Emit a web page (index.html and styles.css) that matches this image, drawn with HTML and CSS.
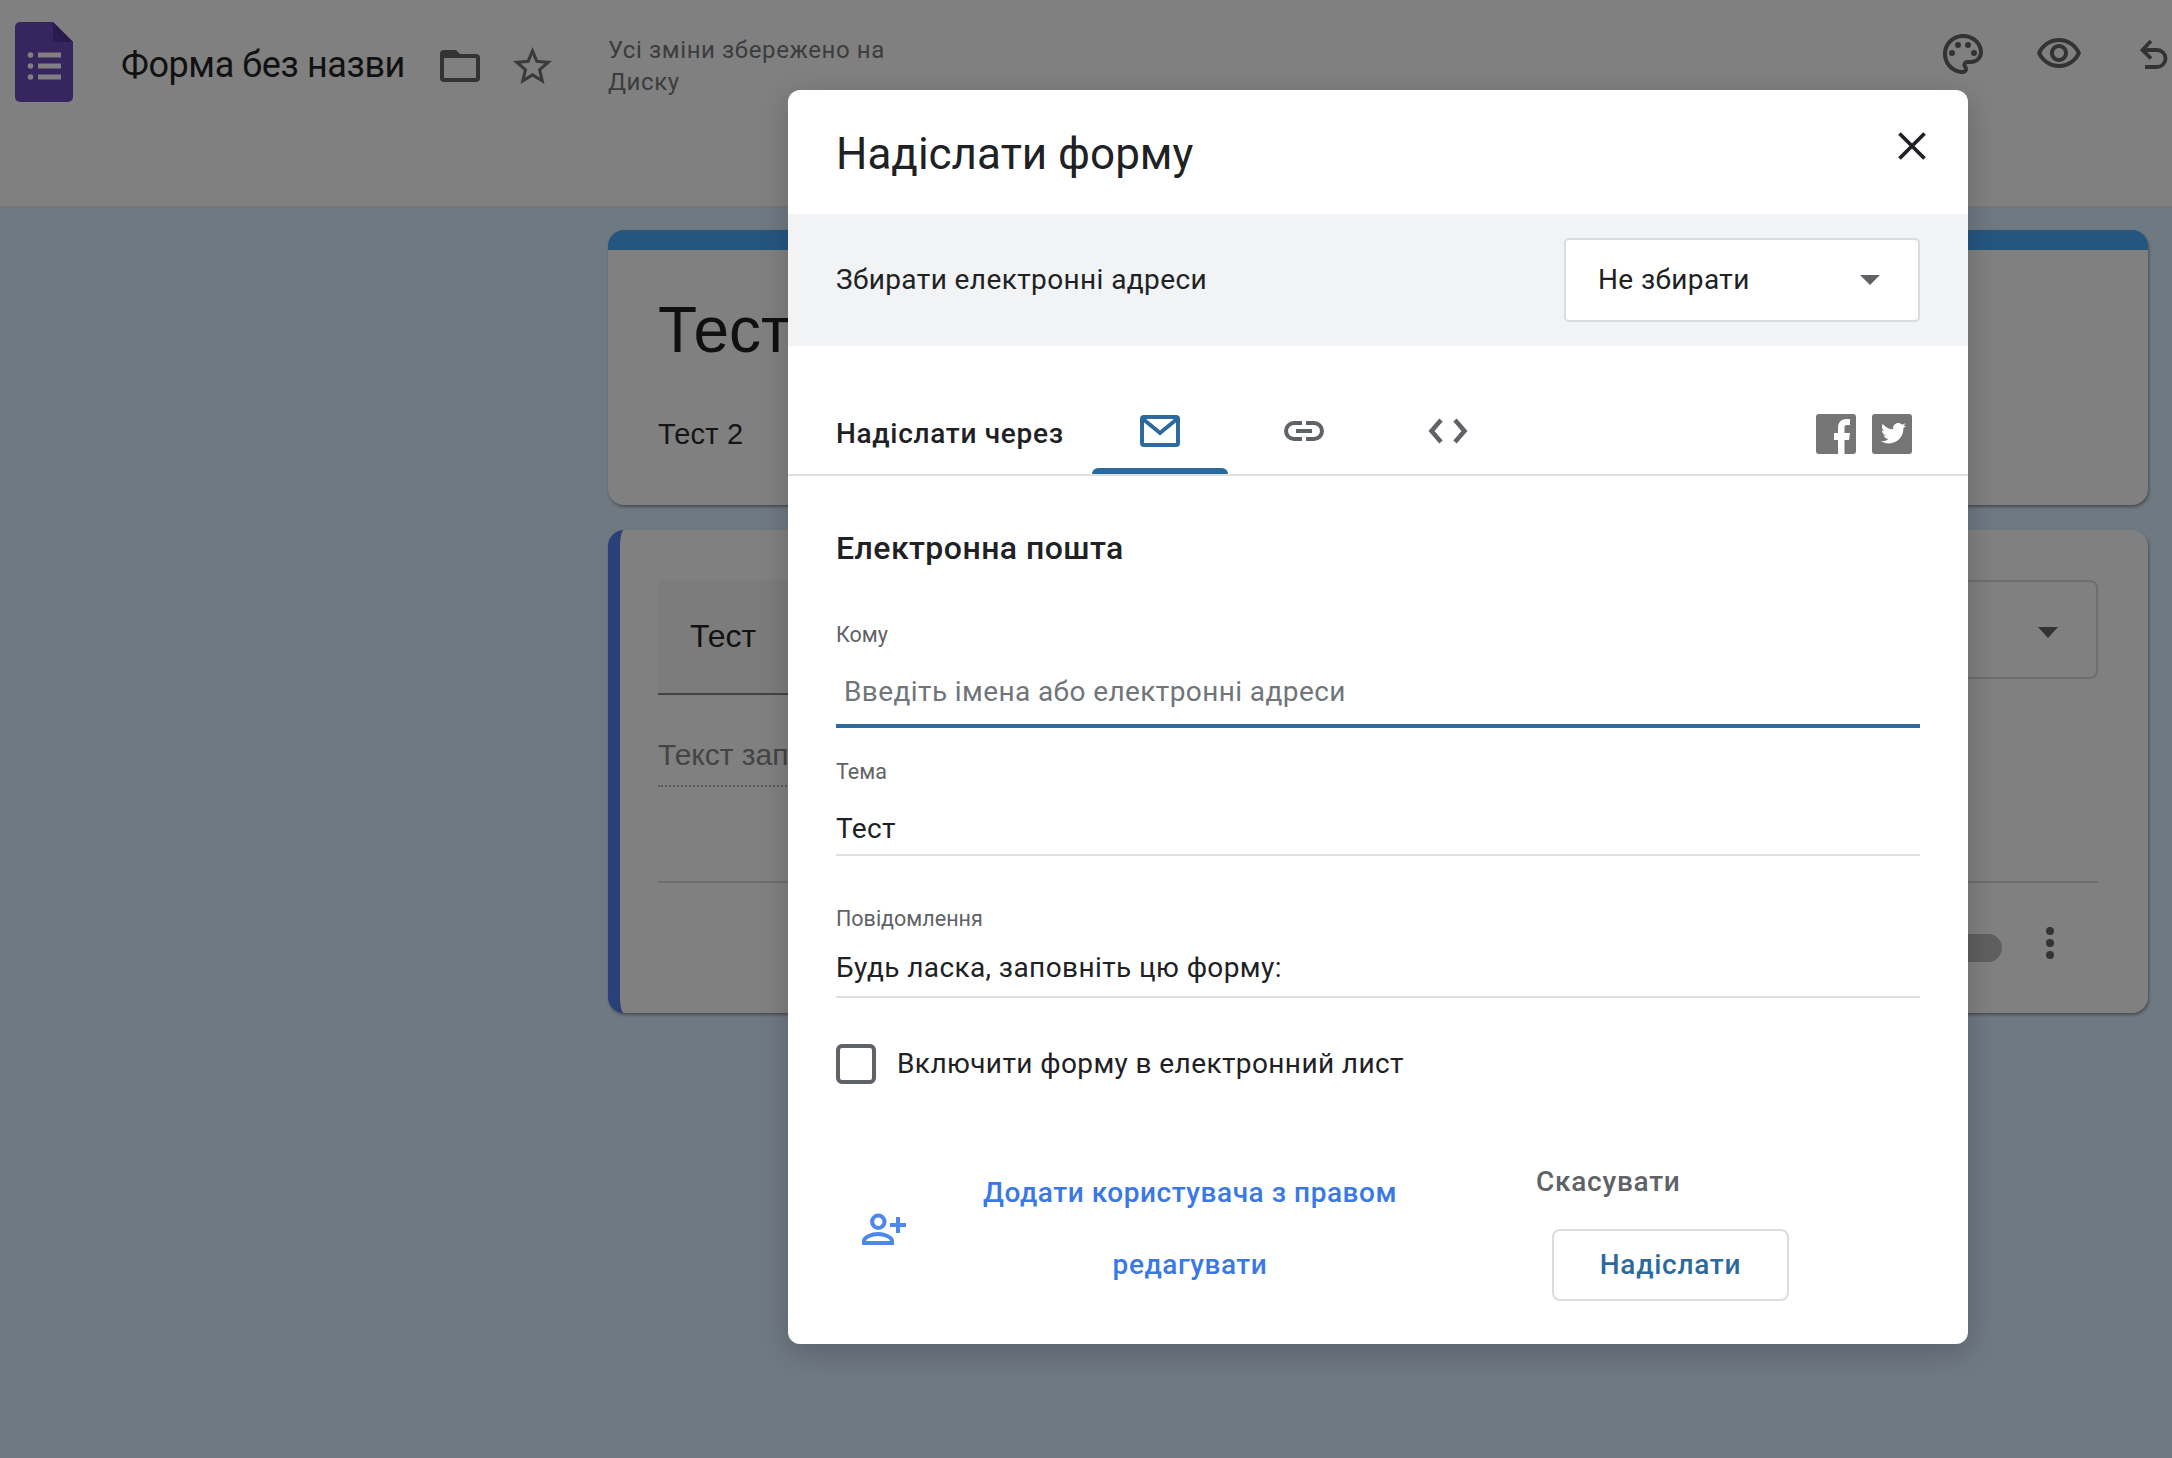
FILE: index.html
```html
<!DOCTYPE html>
<html lang="uk">
<head>
<meta charset="utf-8">
<title>Форма без назви</title>
<link rel="stylesheet" href="styles.css">
</head>
<body>
<div class="app">
  <header class="topbar">
    <svg class="logo" viewBox="0 0 58 80" width="58" height="80">
      <path fill="#37255f" d="M5 0H38L58 20V75a5 5 0 0 1-5 5H5a5 5 0 0 1-5-5V5a5 5 0 0 1 5-5z"/>
      <path fill="#2a1a4e" d="M38 0L58 20H38z"/>
      <g fill="#808080"><circle cx="15.500" cy="33" r="2.800"/><circle cx="15.500" cy="44" r="2.800"/><circle cx="15.500" cy="55" r="2.800"/><rect x="23" y="30.500" width="23" height="5"/><rect x="23" y="41.500" width="23" height="5"/><rect x="23" y="52.500" width="23" height="5"/></g>
    </svg>
    <div class="doc-title">Форма без назви</div>
    <svg class="folder" viewBox="0 0 40 32" width="40" height="32"><path fill="#333" fill-rule="evenodd" d="M4 0h12l4 4h16a4 4 0 0 1 4 4v20a4 4 0 0 1-4 4H4a4 4 0 0 1-4-4V4a4 4 0 0 1 4-4zM4 8v20h32V8z"/></svg>
    <svg class="star" viewBox="2 2 20 19" width="39" height="37"><path fill="#3a3a3a" d="M22 9.240l-7.190-.62L12 2 9.190 8.630 2 9.240l5.460 4.730L5.820 21 12 17.270 18.180 21l-1.630-7.030L22 9.240zM12 15.400l-3.760 2.270 1-4.280-3.320-2.880 4.380-.38L12 6.100l1.710 4.040 4.380.38-3.320 2.880 1 4.280L12 15.400z"/></svg>
    <div class="saved">Усі зміни збережено на<br>Диску</div>
    <div class="top-actions">
      <svg class="palette" viewBox="2 2 20 20" width="40" height="40"><g fill="#333"><path d="M12 22C6.490 22 2 17.510 2 12S6.490 2 12 2s10 4.040 10 9c0 3.310-2.690 6-6 6h-1.770c-.28 0-.5.22-.5.5 0 .12.05.23.13.33.41.47.64 1.060.64 1.670A2.500 2.500 0 0 1 12 22zm0-18c-4.410 0-8 3.590-8 8s3.590 8 8 8c.28 0 .5-.22.5-.5a.54.54 0 0 0-.14-.35c-.41-.46-.63-1.050-.63-1.650a2.500 2.500 0 0 1 2.500-2.500H16c2.210 0 4-1.790 4-4 0-3.860-3.590-7-8-7z"/><circle cx="6.500" cy="11.500" r="1.500"/><circle cx="9.500" cy="7.500" r="1.500"/><circle cx="14.500" cy="7.500" r="1.500"/><circle cx="17.500" cy="11.500" r="1.500"/></g></svg>
      <svg class="eye" viewBox="1 4 22 15" width="44" height="30"><path fill="#333" d="M12 6c3.790 0 7.170 2.130 8.820 5.500C19.170 14.870 15.790 17 12 17s-7.170-2.130-8.820-5.500C4.830 8.130 8.210 6 12 6m0-2C7 4 2.730 7.110 1 11.500 2.730 15.890 7 19 12 19s9.270-3.110 11-7.500C21.270 7.110 17 4 12 4zm0 5c1.380 0 2.500 1.120 2.500 2.500S13.380 14 12 14s-2.500-1.120-2.500-2.500S10.620 9 12 9m0-2c-2.480 0-4.500 2.020-4.500 4.500S9.520 16 12 16s4.500-2.020 4.500-4.500S14.480 7 12 7z"/></svg>
      <svg class="undo" viewBox="0 0 32 30" width="32" height="30"><path fill="none" stroke="#333" stroke-width="3.800" d="M11 2L2.500 11l8.500 8.500M2.500 11H17a8.500 8.500 0 0 1 0 17H5"/></svg>
    </div>
  </header>

  <main class="canvas">
    <section class="card card-title">
      <div class="form-name">Тест</div>
      <div class="form-desc">Тест 2</div>
    </section>
    <section class="card card-question">
      <div class="q-row">
        <div class="q-input">Тест</div>
        <div class="q-type"><span class="q-arrow"></span></div>
      </div>
      <div class="q-answer">Текст зап</div>
      <div class="q-foot">
        <span class="q-toggle"></span>
        <span class="q-more"><i></i><i></i><i></i></span>
      </div>
    </section>
  </main>

  <div class="modal">
    <div class="m-head">
      <h1 class="m-title">Надіслати форму</h1>
      <svg class="m-close" viewBox="0 0 28 28" width="28" height="28"><path fill="none" stroke="#202124" stroke-width="3.800" d="M1.500 1.500l25 25M26.500 1.500l-25 25"/></svg>
    </div>
    <div class="m-band">
      <span class="txt">Збирати електронні адреси</span>
      <div class="m-select"><span class="txt">Не збирати</span><span class="m-arrow"></span></div>
    </div>
    <div class="m-tabs">
      <div class="m-send">Надіслати через</div>
      <div class="tab tab-on">
        <svg viewBox="0 0 40 36" width="40" height="36"><g fill="none" stroke="#2c6a9e" stroke-width="4"><rect x="2" y="3" width="36" height="28" rx="2"/><path d="M3 5l17 14L37 5"/></g></svg>
        <span class="tab-bar"></span>
      </div>
      <div class="tab">
        <svg viewBox="0 0 40 36" width="40" height="36"><path fill="none" stroke="#5f6368" stroke-width="4" d="M18 9H10a8 8 0 0 0 0 16h8M22 9h8a8 8 0 0 1 0 16h-8M12 17h16"/></svg>
        <span class="tab-bar"></span>
      </div>
      <div class="tab">
        <svg viewBox="0 0 40 36" width="40" height="36"><path fill="none" stroke="#5f6368" stroke-width="4.500" d="M13 6L3.500 17 13 28M27 6l9.500 11L27 28"/></svg>
        <span class="tab-bar"></span>
      </div>
      <div class="socials">
        <svg viewBox="0 0 40 40" width="40" height="40"><rect width="40" height="40" rx="3" fill="#757575"/><path fill="#fff" d="M22 40V26h-4v-7h4v-5c0-6 3.500-9 9-9h3v6h-3c-2 0-2.500 1-2.500 3v5h5.500l-1 7h-4.500v14z"/></svg>
        <svg viewBox="0 0 40 40" width="40" height="40"><rect width="40" height="40" rx="3" fill="#757575"/><g transform="translate(7 4.200) scale(1.200)"><path fill="#fff" d="M22.460 6c-.77.35-1.600.58-2.460.69.88-.53 1.560-1.370 1.880-2.380-.83.5-1.750.85-2.720 1.050C18.370 4.500 17.260 4 16 4c-2.350 0-4.270 1.920-4.270 4.290 0 .34.04.67.11.98C8.280 9.090 5.110 7.380 3 4.790c-.37.63-.58 1.370-.58 2.150 0 1.490.75 2.810 1.910 3.560-.71 0-1.370-.2-1.950-.5v.03c0 2.080 1.480 3.820 3.440 4.210a4.220 4.220 0 0 1-1.930.07 4.280 4.280 0 0 0 4 2.980 8.521 8.521 0 0 1-5.330 1.840c-.34 0-.68-.02-1.020-.06C3.440 20.290 5.700 21 8.120 21 16 21 20.330 14.460 20.330 8.790c0-.19 0-.37-.01-.56.84-.6 1.560-1.360 2.140-2.230z"/></g></svg>
      </div>
    </div>
    <div class="m-body">
      <h2 class="m-section">Електронна пошта</h2>
      <div class="field field-to">
        <div class="f-label">Кому</div>
        <div class="f-value f-placeholder">Введіть імена або електронні адреси</div>
      </div>
      <div class="field field-subject">
        <div class="f-label">Тема</div>
        <div class="f-value">Тест</div>
      </div>
      <div class="field field-message">
        <div class="f-label">Повідомлення</div>
        <div class="f-value">Будь ласка, заповніть цю форму:</div>
      </div>
      <label class="include">
        <span class="check"></span>
        <span class="txt">Включити форму в електронний лист</span>
      </label>
    </div>
    <div class="m-foot">
      <svg class="add-icon" viewBox="0 0 44 32" width="44" height="32"><g fill="none" stroke="#4d87ee" stroke-width="4"><circle cx="16.300" cy="8.700" r="6.200"/><path d="M2 30v-2c0-4 8-7 14-7s14 3 14 7v2z"/><path d="M28 12h16M36 4v16"/></g></svg>
      <div class="add-link">Додати користувача з правом редагувати</div>
      <div class="m-actions">
        <div class="cancel">Скасувати</div>
        <div class="send">Надіслати</div>
      </div>
    </div>
  </div>
</div>
</body>
</html>
```

FILE: styles.css
```css
* { box-sizing: border-box; }
html, body { margin: 0; padding: 0; }
body { font-family: Roboto, "Liberation Sans", sans-serif; color: #202124; }

.app { position: relative; width: 2172px; height: 1458px; overflow: hidden; background: #6f7982; }

/* top bar */
.topbar { display: flex; align-items: flex-start; height: 208px; padding-left: 15px; background: #808080; border-bottom: 2px solid #757575; }
.logo { margin-top: 22px; flex: none; }
.doc-title { margin: 43px 0 0 48px; font-size: 36px; line-height: 44px; letter-spacing: -.4px; color: #111; white-space: nowrap; }
.folder { margin: 50px 0 0 35px; flex: none; }
.star { margin: 47px 0 0 33px; flex: none; }
.saved { margin: 34px 0 0 56px; font-size: 24px; line-height: 32px; letter-spacing: .6px; color: #3c3c3c; white-space: nowrap; }
.top-actions { display: flex; align-items: flex-start; margin-left: auto; margin-right: 0; }
.palette { margin: 34px 54px 0 0; flex: none; }
.eye { margin: 38px 59px 0 0; flex: none; }
.undo { margin: 39px 0 0 0; flex: none; }

/* background cards */
.canvas { display: flex; flex-direction: column; gap: 25px; width: 1540px; margin: 22px 0 0 608px; }
.card { background: #808080; border-radius: 16px; box-shadow: 1px 2px 3px rgba(50, 50, 50, .6); }
.card-title { height: 275px; padding: 43px 50px 0 50px; border-top: 20px solid #25567f; }
.form-name { font-family: "Liberation Sans", sans-serif; font-size: 64px; line-height: 74px; color: #101010; }
.form-desc { margin-top: 50px; font-family: "Liberation Sans", sans-serif; font-size: 29px; line-height: 34px; letter-spacing: .2px; color: #151515; }
.card-question { height: 483px; padding: 50px 50px 0 38px; border-left: 12px solid #2a4079; }
.q-row { display: flex; justify-content: space-between; align-items: flex-start; }
.q-input { width: 900px; height: 115px; padding: 36px 0 0 32px; background: #7c7c7c; border-bottom: 2px solid #444; font-family: "Liberation Sans", sans-serif; font-size: 32px; line-height: 40px; color: #111; }
.q-type { display: flex; align-items: center; justify-content: flex-end; width: 500px; height: 99px; padding: 6px 38px 0 0; border: 2px solid #6e6e6e; border-radius: 8px; }
.q-arrow { width: 0; height: 0; border-left: 10px solid transparent; border-right: 10px solid transparent; border-top: 11px solid #333; }
.q-answer { width: 720px; height: 47px; margin-top: 45px; border-bottom: 2px dotted #5a5a5a; font-family: "Liberation Sans", sans-serif; font-size: 30px; line-height: 30px; color: #444; }
.q-foot { display: flex; align-items: center; justify-content: flex-end; height: 132px; margin-top: 94px; border-top: 2px solid #6e6e6e; }
.q-toggle { width: 100px; height: 28px; margin-right: 44px; background: #5f5f5f; border-radius: 14px; }
.q-more { display: flex; flex-direction: column; gap: 4px; margin: 0 44px 10px 0; }
.q-more i { width: 8px; height: 8px; background: #333; border-radius: 50%; }

/* dialog */
.modal { position: absolute; left: 788px; top: 90px; width: 1180px; height: 1254px; background: #fff; border-radius: 12px; box-shadow: 0 8px 30px rgba(0, 0, 0, .2); overflow: hidden; }
.txt { font-size: 28px; letter-spacing: .4px; line-height: 40px; }
.m-head { display: flex; justify-content: space-between; align-items: flex-start; height: 124px; padding: 0 42px 0 48px; }
.m-title { margin: 34px 0 0 0; font-size: 44px; font-weight: 400; line-height: 60px; color: #202124; }
.m-close { margin-top: 42px; }
.m-band { display: flex; justify-content: space-between; align-items: center; height: 132px; padding: 0 48px; background: #f1f3f4; }
.m-select { display: flex; justify-content: space-between; align-items: center; width: 356px; height: 84px; padding: 0 38px 0 32px; background: #fff; border: 2px solid #dadce0; border-radius: 5px; }
.m-arrow { width: 0; height: 0; border-left: 10px solid transparent; border-right: 10px solid transparent; border-top: 10px solid #5f6368; }

.m-tabs { display: flex; align-items: flex-end; height: 130px; padding: 0 56px 0 48px; border-bottom: 2px solid #e0e0e0; }
.m-send { width: 256px; margin-bottom: 20px; font-size: 28px; font-weight: 500; line-height: 40px; letter-spacing: .7px; color: #202124; }
.tab { display: flex; flex-direction: column; justify-content: space-between; align-items: center; width: 136px; height: 60px; margin-right: 8px; }
.tab-bar { display: block; width: 100%; height: 6px; border-radius: 6px 6px 0 0; }
.tab-on .tab-bar { background: #2c6a9e; }
.socials { display: flex; gap: 16px; margin: 0 0 20px auto; }

.m-body { padding: 52px 48px 0 48px; }
.m-section { margin: 0; font-size: 32px; font-weight: 500; line-height: 40px; letter-spacing: .45px; color: #202124; }
.f-label { font-size: 21.500px; line-height: 30px; color: #5f6368; }
.f-value { font-size: 28px; line-height: 40px; letter-spacing: .4px; color: #202124; }
.field-to { margin-top: 52px; }
.field-to .f-value { margin-top: 22px; padding: 0 0 12px 8px; border-bottom: 4px solid #2c6a9e; color: #70757a; }
.field-subject { margin-top: 29px; }
.field-subject .f-value { margin-top: 22px; padding-bottom: 5px; border-bottom: 2px solid #e0e0e0; }
.field-message { margin-top: 48px; }
.field-message .f-value { margin-top: 14px; padding-bottom: 8px; border-bottom: 2px solid #e0e0e0; }
.include { display: flex; align-items: center; gap: 21px; margin-top: 46px; }
.check { display: block; width: 40px; height: 40px; border: 4px solid #5f6368; border-radius: 6px; }

.m-foot { display: flex; align-items: center; margin-top: 72px; padding-left: 74px; }
.add-icon { flex: none; }
.add-link { width: 460px; margin-left: 54px; font-size: 28px; font-weight: 500; line-height: 72px; letter-spacing: .55px; text-align: center; color: #3b78e7; }
.m-actions { margin-left: 116px; }
.cancel { font-size: 28px; font-weight: 500; line-height: 52px; letter-spacing: .75px; color: #5f6368; }
.send { width: 237px; height: 72px; margin: 21px 0 0 16px; border: 2px solid #dadce0; border-radius: 8px; font-size: 28px; font-weight: 500; line-height: 68px; letter-spacing: .75px; text-align: center; color: #2c6a9e; }
```
